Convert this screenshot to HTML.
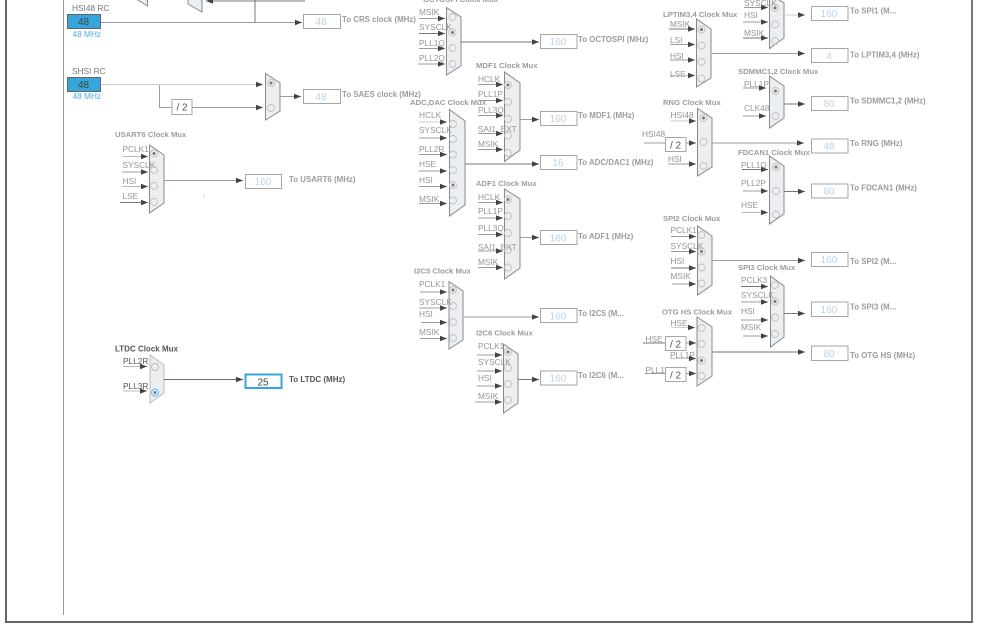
<!DOCTYPE html>
<html>
<head>
<meta charset="utf-8">
<style>
html,body{margin:0;padding:0;background:#fff;width:999px;height:626px;overflow:hidden}
svg{display:block;position:absolute;left:0;top:0;filter:blur(.35px)}
text{font-family:"Liberation Sans",sans-serif;font-size:8.3px;fill:#959595}
.b{font-weight:bold;fill:#9c9c9c;font-size:7.7px}
.o{font-weight:bold;fill:#9c9c9c;font-size:7.9px}
.v{font-size:10px;fill:#bcd2ea;text-anchor:middle}
.m{font-size:8.3px;fill:#4ab0e8}
.d{font-size:10px;fill:#444;text-anchor:middle}
.k{fill:#555;font-size:8.3px}
.kb{fill:#555;font-weight:bold;font-size:8px}
.h{fill:#777}
line,path.w{stroke:#9c9c9c;stroke-width:1;fill:none}
line.a{marker-end:url(#ar)}
line.s{stroke:#777}
.mx{fill:#ebeff2;stroke:#888;stroke-width:1}
.bx{fill:#fff;stroke:#a6a6a6;stroke-width:1}
.r{fill:none;stroke:#c0c0c0;stroke-width:.9}
.p{fill:#777;stroke:none}
</style>
</head>
<body>
<svg width="999" height="626" viewBox="0 0 999 626" xmlns="http://www.w3.org/2000/svg">
<defs>
<marker id="ar" markerUnits="userSpaceOnUse" markerWidth="7" markerHeight="6" refX="7" refY="3" orient="auto"><path d="M0 .2L7 3L0 5.8Z" fill="#444"/></marker>
</defs>

<!-- frame -->
<rect x="0" y="0" width="999" height="626" fill="#fff"/>
<line x1="6" y1="0" x2="6" y2="622" style="stroke:#666;stroke-width:2"/>
<line x1="972" y1="0" x2="972" y2="622" style="stroke:#707a80;stroke-width:2"/>
<line x1="5" y1="622" x2="973" y2="622" style="stroke:#666;stroke-width:2"/>
<line x1="63.500" y1="0" x2="63.500" y2="615" style="stroke:#999"/>

<!-- top-left partial -->
<polygon class="mx" points="138,-4 147.500,0 147.500,6 138,0"/>
<polygon class="mx" points="188,-4 202,0 202,12 188,4"/>
<line x1="255" y1="0" x2="255" y2="22" class="s"/>
<line x1="305" y1="1" x2="206" y2="1" class="a s"/>

<!-- HSI48 -->
<text class="h" x="72" y="11">HSI48 RC</text>
<rect x="67.500" y="14.500" width="33" height="14" fill="#36a5db" stroke="#666"/>
<text class="d" x="83.500" y="25">48</text>
<text class="m" x="72.500" y="37">48 MHz</text>
<line x1="101" y1="22.500" x2="302" y2="22.500" class="a"/>
<rect class="bx" x="303.500" y="14.500" width="37" height="14"/>
<text class="v" x="321" y="25">48</text>
<text class="o" x="342" y="22">To CRS clock (MHz)</text>

<!-- SHSI -->
<text class="h" x="72" y="74">SHSI RC</text>
<rect x="67.500" y="77.500" width="33" height="14" fill="#36a5db" stroke="#666"/>
<text class="d" x="83.500" y="88">48</text>
<text class="m" x="72.500" y="99">48 MHz</text>
<line x1="101" y1="84.500" x2="263" y2="84.500" class="a" style="stroke:#ccc"/>
<path class="w" d="M159.500 85V107.500H172"/>
<rect class="bx" x="172" y="99.500" width="20" height="15"/>
<text x="182" y="110.500" style="font-size:10px;fill:#555;text-anchor:middle">/ 2</text>
<line x1="192" y1="107.500" x2="263" y2="107.500" class="a"/>
<polygon class="mx" points="265.500,73.500 280,83 280,111 265.500,120"/>
<circle class="r" cx="271" cy="83" r="3.500"/><circle class="p" cx="271" cy="83" r="1.500"/>
<circle class="r" cx="271" cy="108" r="3.500"/>
<line x1="280" y1="96.500" x2="301" y2="96.500" class="a"/>
<rect class="bx" x="303.500" y="89.500" width="37" height="14"/>
<text class="v" x="321" y="100">48</text>
<text class="o" x="342" y="97">To SAES clock (MHz)</text>

<!-- USART6 -->
<text class="b" x="115" y="137">USART6 Clock Mux</text>
<polygon class="mx" points="149.500,145 164,155 164,203 149.500,213"/>
<text x="122.500" y="152">PCLK1</text><text x="122.500" y="168">SYSCLK</text><text x="122.500" y="184">HSI</text><text x="122.500" y="199">LSE</text>
<line x1="122" y1="156.500" x2="148" y2="156.500" class="a" style="stroke:#bbb"/>
<line x1="122" y1="172" x2="148" y2="172" class="a"/>
<line x1="122" y1="186.500" x2="148" y2="186.500" class="a" style="stroke:#bbb"/>
<line x1="120" y1="202.500" x2="148" y2="202.500" class="a s"/>
<circle class="r" cx="154" cy="153.500" r="3.500"/><circle class="p" cx="154" cy="153.500" r="1.500"/>
<circle class="r" cx="154" cy="170" r="3.500"/><circle class="r" cx="154" cy="186" r="3.500"/><circle class="r" cx="154" cy="202" r="3.500"/>
<line x1="164" y1="180.500" x2="243" y2="180.500" class="a"/>
<rect class="bx" x="245.500" y="174.500" width="36" height="14"/>
<text class="v" x="263" y="185">160</text>
<text class="o" x="289" y="182">To USART6 (MHz)</text>
<rect x="204" y="195" width="1" height="1" fill="#aaa"/>

<!-- LTDC -->
<text x="115" y="351.500" style="font-weight:bold;fill:#555;font-size:8px">LTDC Clock Mux</text>
<polygon points="150,355 164,365 164,393 150,403" fill="#ebeff2" stroke="#bbb"/>
<text x="123" y="364" class="k">PLL2R</text><text x="123" y="389" class="k">PLL3R</text>
<line x1="123" y1="366.500" x2="147" y2="366.500" class="a" style="stroke:#bbb"/>
<line x1="123" y1="391" x2="147" y2="391" class="a" style="stroke:#bbb"/>
<circle cx="155" cy="367" r="3.500" fill="none" stroke="#bbb"/>
<circle cx="155" cy="392.500" r="3.500" fill="none" stroke="#6db8e8"/><circle cx="155" cy="392.500" r="1.500" fill="#2a8fd6"/>
<line x1="164" y1="379.500" x2="243" y2="379.500" class="a" style="stroke:#666"/>
<rect x="245.500" y="374.500" width="36" height="13.500" fill="#fff" stroke="#36a5db" stroke-width="2"/>
<text class="d" x="263" y="385.500">25</text>
<text class="kb" x="289" y="382">To LTDC (MHz)</text>

<!-- OCTOSPI -->
<text class="b" x="423" y="2">OCTOSPI Clock Mux</text>
<polygon class="mx" points="446.500,7.500 461,17 461,66 446.500,75"/>
<text x="419" y="15">MSIK</text><text x="419" y="30">SYSCLK</text><text x="419" y="46">PLL1Q</text><text x="419" y="61">PLL2Q</text>
<line x1="419" y1="18.500" x2="445" y2="18.500" class="a"/><line x1="419" y1="33.500" x2="445" y2="33.500" class="a s"/><line x1="419" y1="48.500" x2="445" y2="48.500" class="a"/><line x1="418" y1="64" x2="445" y2="64" class="a"/>
<circle class="r" cx="452.500" cy="17" r="3.500"/><circle class="r" cx="452.500" cy="32.500" r="3.500"/><circle class="p" cx="452.500" cy="32.500" r="1.500"/><circle class="r" cx="452.500" cy="48" r="3.500"/><circle class="r" cx="452.500" cy="64" r="3.500"/>
<line x1="461" y1="42" x2="539" y2="42" class="a s"/>
<rect class="bx" x="540.500" y="34.500" width="36.500" height="14"/>
<text class="v" x="558" y="45">160</text>
<text class="o" x="578" y="42">To OCTOSPI (MHz)</text>

<!-- MDF1 -->
<text class="b" x="476" y="68">MDF1 Clock Mux</text>
<polygon class="mx" points="504.500,72 520,83 520,150 504.500,161.500"/>
<text x="478" y="82">HCLK</text><text x="478" y="97">PLL1P</text><text x="478" y="113">PLL3Q</text><text x="478" y="132">SAI1_EXT</text><text x="478" y="147">MSIK</text>
<line x1="478" y1="84.500" x2="503" y2="84.500" class="a"/><line x1="478" y1="100.500" x2="503" y2="100.500" class="a"/><line x1="478" y1="115.500" x2="503" y2="115.500" class="a"/><line x1="478" y1="133.500" x2="503" y2="133.500" class="a"/><line x1="478" y1="149.500" x2="503" y2="149.500" class="a"/>
<circle class="r" cx="508" cy="85" r="3.500"/><circle class="p" cx="508" cy="85" r="1.500"/><circle class="r" cx="508" cy="102" r="3.500"/><circle class="r" cx="508" cy="119" r="3.500"/><circle class="r" cx="508" cy="135.500" r="3.500"/><circle class="r" cx="508" cy="153" r="3.500"/>
<line x1="520" y1="119.500" x2="539" y2="119.500" class="a"/>
<rect class="bx" x="540.500" y="111.500" width="36.500" height="14"/>
<text class="v" x="558" y="122">160</text>
<text class="o" x="578" y="118">To MDF1 (MHz)</text>

<!-- ADC,DAC -->
<text class="b" x="410" y="105">ADC,DAC Clock Mux</text>
<polygon class="mx" points="449.500,109.500 465,121 465,205 449.500,216"/>
<text x="419" y="118">HCLK</text><text x="419" y="133">SYSCLK</text><text x="419" y="152">PLL2R</text><text x="419" y="167">HSE</text><text x="419" y="183">HSI</text><text x="419" y="202">MSIK</text>
<line x1="419" y1="122" x2="447" y2="122" class="a" style="stroke:#ccc"/><line x1="419" y1="138" x2="447" y2="138" class="a"/><line x1="419" y1="154.500" x2="447" y2="154.500" class="a"/><line x1="419" y1="171" x2="447" y2="171" class="a"/><line x1="419" y1="186.500" x2="447" y2="186.500" class="a"/><line x1="419" y1="203.500" x2="447" y2="203.500" class="a"/>
<circle class="r" cx="453" cy="124" r="3.500"/><circle class="r" cx="453" cy="139" r="3.500"/><circle class="r" cx="453" cy="154.500" r="3.500"/><circle class="r" cx="453" cy="170" r="3.500"/><circle class="r" cx="453" cy="185" r="3.500"/><circle class="p" cx="453" cy="185" r="1.500"/><circle class="r" cx="453" cy="200.500" r="3.500"/>
<line x1="465" y1="164" x2="539" y2="164" class="a s"/>
<rect class="bx" x="540.500" y="155.500" width="36.500" height="14"/>
<text class="v" x="558" y="166">16</text>
<text class="o" x="578" y="165">To ADC/DAC1 (MHz)</text>

<!-- ADF1 -->
<text class="b" x="476" y="186">ADF1 Clock Mux</text>
<polygon class="mx" points="504.500,189 520,199 520,268 504.500,279"/>
<text x="478" y="200">HCLK</text><text x="478" y="214">PLL1P</text><text x="478" y="231">PLL3Q</text><text x="478" y="250">SAI1_EXT</text><text x="478" y="265">MSIK</text>
<line x1="478" y1="202.500" x2="503" y2="202.500" class="a"/><line x1="478" y1="218" x2="503" y2="218" class="a"/><line x1="478" y1="234.500" x2="503" y2="234.500" class="a"/><line x1="478" y1="251" x2="503" y2="251" class="a"/><line x1="478" y1="267.500" x2="503" y2="267.500" class="a"/>
<circle class="r" cx="508" cy="199.500" r="3.500"/><circle class="p" cx="508" cy="199.500" r="1.500"/><circle class="r" cx="508" cy="216" r="3.500"/><circle class="r" cx="508" cy="233" r="3.500"/><circle class="r" cx="508" cy="250" r="3.500"/><circle class="r" cx="508" cy="267.500" r="3.500"/>
<line x1="520" y1="237.500" x2="539" y2="237.500" class="a"/>
<rect class="bx" x="540.500" y="230.500" width="36.500" height="14"/>
<text class="v" x="558" y="241.500">160</text>
<text class="o" x="578" y="239">To ADF1 (MHz)</text>

<!-- I2C5 -->
<text class="b" x="414" y="273.500">I2C5 Clock Mux</text>
<polygon class="mx" points="449,281.500 463,291 463,340 449,349"/>
<text x="419" y="287">PCLK1</text><text x="419" y="305">SYSCLK</text><text x="419" y="317">HSI</text><text x="419" y="335">MSIK</text>
<line x1="420" y1="292" x2="447" y2="292" class="a"/><line x1="419" y1="308" x2="447" y2="308" class="a"/><line x1="421" y1="322.500" x2="447" y2="322.500" class="a"/><line x1="420" y1="338.500" x2="447" y2="338.500" class="a"/>
<circle class="r" cx="453" cy="290" r="3.500"/><circle class="p" cx="453" cy="290" r="1.500"/><circle class="r" cx="453" cy="306" r="3.500"/><circle class="r" cx="453" cy="322" r="3.500"/><circle class="r" cx="453" cy="338" r="3.500"/>
<line x1="463" y1="317" x2="539" y2="317" class="a"/>
<rect class="bx" x="540.500" y="308.500" width="36.500" height="14"/>
<text class="v" x="558" y="319.500">160</text>
<text class="o" x="578" y="316">To I2C5 (M...</text>

<!-- I2C6 -->
<text class="b" x="476" y="335.500">I2C6 Clock Mux</text>
<polygon class="mx" points="503.500,344 518,354 518,403 503.500,413"/>
<text x="478" y="349">PCLK1</text><text x="478" y="365">SYSCLK</text><text x="478" y="381">HSI</text><text x="478" y="399">MSIK</text>
<line x1="477" y1="355" x2="502" y2="355" class="a"/><line x1="477" y1="371" x2="502" y2="371" class="a"/><line x1="477" y1="386" x2="502" y2="386" class="a"/><line x1="475" y1="402" x2="502" y2="402" class="a"/>
<circle class="r" cx="508" cy="352" r="3.500"/><circle class="p" cx="508" cy="352" r="1.500"/><circle class="r" cx="508" cy="368" r="3.500"/><circle class="r" cx="508" cy="384" r="3.500"/><circle class="r" cx="508" cy="400" r="3.500"/>
<line x1="518" y1="379.500" x2="539" y2="379.500" class="a s"/>
<rect class="bx" x="540.500" y="371" width="36.500" height="14"/>
<text class="v" x="558" y="381.500">160</text>
<text class="o" x="578" y="378">To I2C6 (M...</text>

<!-- SPI1 -->
<polygon class="mx" points="769.500,-6 784,3 784,38 769.500,48.500"/>
<text x="744" y="6">SYSCLK</text><text x="744" y="18">HSI</text><text x="744" y="36">MSIK</text>
<line x1="744" y1="7.500" x2="768" y2="7.500" class="a"/><line x1="743" y1="22" x2="768" y2="22" class="a"/><line x1="743" y1="38" x2="768" y2="38" class="a s"/>
<circle class="r" cx="775" cy="8" r="3.500"/><circle class="p" cx="775" cy="8" r="1.500"/><circle class="r" cx="775" cy="24.500" r="3.500"/><circle class="r" cx="775" cy="41" r="3.500"/>
<line x1="784" y1="15" x2="805" y2="15" class="a" style="stroke:#ccc"/>
<rect class="bx" x="811.500" y="6.500" width="36.500" height="14"/>
<text class="v" x="829" y="17">160</text>
<text class="o" x="850" y="13.500">To SPI1 (M...</text>

<!-- LPTIM3,4 -->
<text class="b" x="663" y="17">LPTIM3,4 Clock Mux</text>
<polygon class="mx" points="696.500,19 711,29 711,78 696.500,87"/>
<text x="670" y="27">MSIK</text><text x="670" y="43">LSI</text><text x="670" y="59">HSI</text><text x="670" y="77">LSE</text>
<line x1="669" y1="29" x2="695" y2="29" class="a s"/><line x1="670" y1="44.500" x2="695" y2="44.500" class="a"/><line x1="670" y1="60" x2="695" y2="60" class="a"/><line x1="670" y1="75.500" x2="695" y2="75.500" class="a" style="stroke:#bbb"/>
<circle class="r" cx="701.500" cy="29.500" r="3.500"/><circle class="p" cx="701.500" cy="29.500" r="1.500"/><circle class="r" cx="701.500" cy="45.500" r="3.500"/><circle class="r" cx="701.500" cy="62" r="3.500"/><circle class="r" cx="701.500" cy="78.500" r="3.500"/>
<line x1="711" y1="53.500" x2="805" y2="53.500" class="a"/>
<rect class="bx" x="811.500" y="48.500" width="36.500" height="14"/>
<text class="v" x="829" y="59.500">4</text>
<text class="o" x="850" y="57.500">To LPTIM3,4 (MHz)</text>

<!-- SDMMC -->
<text class="b" x="738" y="74">SDMMC1,2 Clock Mux</text>
<polygon class="mx" points="769.500,76 784,86 784,118 769.500,128"/>
<text x="744" y="87">PLL1P</text><text x="744" y="111">CLK48</text>
<line x1="743" y1="88" x2="766" y2="88" class="a"/><line x1="743" y1="116" x2="766" y2="116" class="a"/>
<circle class="r" cx="775.500" cy="91" r="3.500"/><circle class="p" cx="775.500" cy="91" r="1.500"/><circle class="r" cx="775.500" cy="116" r="3.500"/>
<line x1="784" y1="104" x2="805" y2="104" class="a s"/>
<rect class="bx" x="811.500" y="96.500" width="36.500" height="14"/>
<text class="v" x="829" y="107">80</text>
<text class="o" x="850" y="103.500">To SDMMC1,2 (MHz)</text>

<!-- RNG -->
<text class="b" x="663" y="105">RNG Clock Mux</text>
<polygon class="mx" points="697.500,108.500 712,118 712,167 697.500,176"/>
<text x="670.500" y="118">HSI48</text><text x="642" y="137">HSI48</text><text x="668" y="162">HSI</text>
<line x1="670" y1="121" x2="696" y2="121" class="a" style="stroke:#ccc"/>
<line x1="644" y1="143" x2="665" y2="143"/>
<rect class="bx" x="665.500" y="137.500" width="20.500" height="14"/>
<text x="675.500" y="148.500" style="font-size:10px;fill:#555;text-anchor:middle">/ 2</text>
<line x1="686" y1="143" x2="696" y2="143" class="a"/>
<line x1="668" y1="164" x2="696" y2="164" class="a"/>
<circle class="r" cx="703.500" cy="118" r="3.500"/><circle class="p" cx="703.500" cy="118" r="1.500"/><circle class="r" cx="703.500" cy="142" r="3.500"/><circle class="r" cx="703.500" cy="166" r="3.500"/>
<line x1="712" y1="143" x2="804" y2="143" class="a"/>
<rect class="bx" x="811.500" y="139" width="36.500" height="14"/>
<text class="v" x="829" y="149.500">48</text>
<text class="o" x="850" y="146">To RNG (MHz)</text>

<!-- FDCAN1 -->
<text class="b" x="738" y="155">FDCAN1 Clock Mux</text>
<polygon class="mx" points="769.500,156 784,166 784,214 769.500,224"/>
<text x="741" y="168">PLL1Q</text><text x="741" y="186">PLL2P</text><text x="741" y="208">HSE</text>
<line x1="742" y1="169.500" x2="768" y2="169.500" class="a s"/><line x1="743" y1="191" x2="768" y2="191" class="a"/><line x1="742" y1="212.500" x2="768" y2="212.500" class="a" style="stroke:#bbb"/>
<circle class="r" cx="776" cy="167" r="3.500"/><circle class="p" cx="776" cy="167" r="1.500"/><circle class="r" cx="776" cy="191" r="3.500"/><circle class="r" cx="776" cy="214.500" r="3.500"/>
<line x1="784" y1="191.500" x2="805" y2="191.500" class="a s"/>
<rect class="bx" x="811.500" y="184" width="36.500" height="14"/>
<text class="v" x="829" y="194.500">80</text>
<text class="o" x="850" y="190.500">To FDCAN1 (MHz)</text>

<!-- SPI2 -->
<text class="b" x="663" y="221">SPI2 Clock Mux</text>
<polygon class="mx" points="697.500,226 712,236 712,285 697.500,295"/>
<text x="670.500" y="233">PCLK1</text><text x="670.500" y="249">SYSCLK</text><text x="670.500" y="264">HSI</text><text x="670.500" y="279">MSIK</text>
<line x1="671" y1="236.500" x2="696" y2="236.500" class="a"/><line x1="671" y1="251.500" x2="696" y2="251.500" class="a"/><line x1="671" y1="268" x2="696" y2="268" class="a s"/><line x1="672" y1="284" x2="696" y2="284" class="a"/>
<circle class="r" cx="701.500" cy="235" r="3.500"/><circle class="r" cx="701.500" cy="251.500" r="3.500"/><circle class="p" cx="701.500" cy="251.500" r="1.500"/><circle class="r" cx="701.500" cy="267.500" r="3.500"/><circle class="r" cx="701.500" cy="283.500" r="3.500"/>
<line x1="712" y1="260.500" x2="805" y2="260.500" class="a"/>
<rect class="bx" x="811.500" y="252.500" width="36.500" height="14"/>
<text class="v" x="829" y="263">160</text>
<text class="o" x="850" y="264">To SPI2 (M...</text>

<!-- SPI3 -->
<text class="b" x="738" y="270">SPI3 Clock Mux</text>
<polygon class="mx" points="770.500,276 784,286 784,337 770.500,347"/>
<text x="741" y="283">PCLK3</text><text x="741" y="298">SYSCLK</text><text x="741" y="314">HSI</text><text x="741" y="330">MSIK</text>
<line x1="741" y1="286.500" x2="768" y2="286.500" class="a s"/><line x1="741" y1="302" x2="768" y2="302" class="a"/><line x1="741" y1="320" x2="768" y2="320" class="a"/><line x1="743" y1="336" x2="768" y2="336" class="a"/>
<circle class="r" cx="775" cy="285" r="3.500"/><circle class="r" cx="775" cy="301.500" r="3.500"/><circle class="p" cx="775" cy="301.500" r="1.500"/><circle class="r" cx="775" cy="317.500" r="3.500"/><circle class="r" cx="775" cy="334" r="3.500"/>
<line x1="784" y1="313.500" x2="805" y2="313.500" class="a s"/>
<rect class="bx" x="811.500" y="302" width="36.500" height="14.500"/>
<text class="v" x="829" y="313">160</text>
<text class="o" x="850" y="309.500">To SPI3 (M...</text>

<!-- OTG HS -->
<text class="b" x="662" y="314.500">OTG HS Clock Mux</text>
<polygon class="mx" points="697,317 712,327 712,376 697,386"/>
<text x="670.500" y="326">HSE</text><text x="645.500" y="342">HSE</text><text x="670" y="358">PLL1P</text><text x="645.500" y="373">PLL1P</text>
<line x1="671" y1="327.500" x2="695" y2="327.500" class="a" style="stroke:#ccc"/>
<line x1="643" y1="343" x2="665" y2="343" class="s"/><line x1="645" y1="373.500" x2="665" y2="373.500"/>
<rect class="bx" x="665.500" y="336.500" width="20.500" height="14"/>
<rect class="bx" x="665.500" y="367.500" width="20.500" height="14"/>
<text x="675.500" y="347.500" style="font-size:10px;fill:#555;text-anchor:middle">/ 2</text>
<text x="675.500" y="378.500" style="font-size:10px;fill:#555;text-anchor:middle">/ 2</text>
<line x1="686" y1="343" x2="696" y2="343" class="a"/><line x1="686" y1="373.500" x2="696" y2="373.500" class="a"/>
<line x1="670" y1="358.500" x2="696" y2="358.500" class="a" style="stroke:#ccc"/>
<circle class="r" cx="701.500" cy="328" r="3.500"/><circle class="r" cx="701.500" cy="344" r="3.500"/><circle class="r" cx="701.500" cy="360.500" r="3.500"/><circle class="p" cx="701.500" cy="360.500" r="1.500"/><circle class="r" cx="701.500" cy="376" r="3.500"/>
<line x1="712" y1="352" x2="805" y2="352" class="a s"/>
<rect class="bx" x="811.500" y="346" width="36.500" height="14.500"/>
<text class="v" x="829" y="357">80</text>
<text class="o" x="850" y="358">To OTG HS (MHz)</text>
</svg>
</body>
</html>
